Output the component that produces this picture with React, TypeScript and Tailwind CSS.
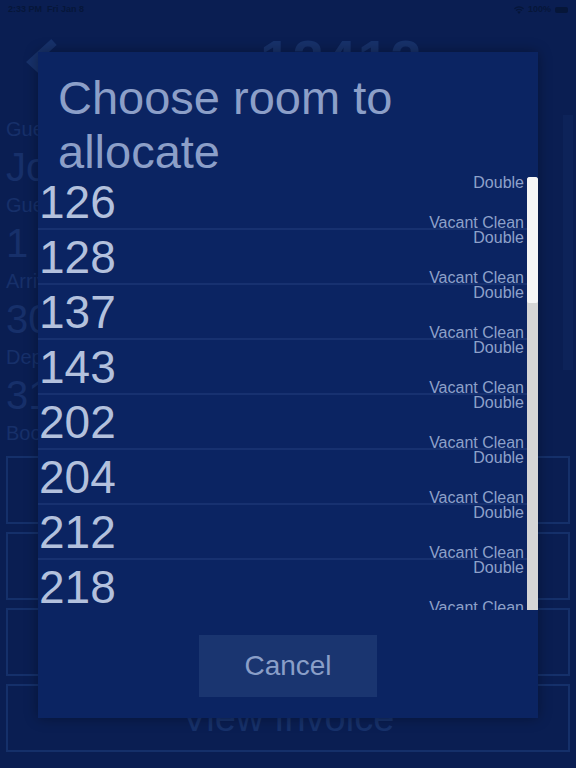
import React from "react";

const rooms = ["126", "128", "137", "143", "202", "204", "212", "218"];

const fields = [
  { label: "Guest", value: "John Smith" },
  { label: "Guests", value: "1" },
  { label: "Arrival", value: "30/12/2020" },
  { label: "Departure", value: "31/12/2020" },
];

const actions = ["Allocate Room", "Check In", "Add Payment", "View Invoice"];

function StatusBar() {
  return (
    <div className="flex h-[20px] items-center justify-between px-[8px] text-[9px] font-semibold text-[#061639]">
      <span>2:33 PM&nbsp;&nbsp;Fri Jan 8</span>
      <div className="flex items-center gap-1">
        <svg width="10" height="8" viewBox="0 0 10 8" fill="#061639">
          <path d="M5 8 L3.2 5.8 A3 3 0 0 1 6.8 5.8 Z M1.6 4 A5.5 5.5 0 0 1 8.4 4 L7.6 4.9 A4.3 4.3 0 0 0 2.4 4.9 Z M0 2.3 A8 8 0 0 1 10 2.3 L9.2 3.2 A6.7 6.7 0 0 0 0.8 3.2 Z" />
        </svg>
        <span>100%</span>
        <div className="h-[6px] w-[13px] rounded-[2px] bg-[#061639]" />
      </div>
    </div>
  );
}

function RoomRow({ room }: { room: string }) {
  return (
    <div className="flex h-[55px] shrink-0 items-center justify-between border-b-2 border-[#173170] pl-[1px] pr-[3px]">
      <span className="text-[46px] leading-none text-[#b3c1dd]">{room}</span>
      <div className="flex h-[56px] flex-col items-end justify-between self-start text-[16px] leading-[16px] text-[#8ea1ca]">
        <span>Double</span>
        <span>Vacant Clean</span>
      </div>
    </div>
  );
}

export default function App() {
  return (
    <div
      className="relative h-[768px] w-[576px] overflow-hidden bg-[#0a1e52]"
      style={{ fontFamily: '"Liberation Sans", Arial, sans-serif' }}
    >
      {/* page behind the dialog */}
      <StatusBar />
      <div className="flex h-[50px] items-start">
        <svg width="40" height="44" viewBox="0 0 40 44" className="ml-[22px] mt-[18px]" fill="none" stroke="#17316a" strokeWidth="8">
          <path d="M32 4 L10 24 L32 44" />
        </svg>
        <span className="ml-[198px] mt-[12px] text-[56px] font-bold leading-none tracking-wide text-[#17316a]">12412</span>
      </div>
      <div className="flex flex-col pl-[6px] pt-[48px]">
        {fields.map((f) => (
          <div key={f.label} className="flex flex-col">
            <span className="text-[20px] leading-[22px] text-[#17306a]">{f.label}</span>
            <span className="text-[40px] leading-[54px] text-[#17306a]">{f.value}</span>
          </div>
        ))}
        <span className="text-[20px] leading-[22px] text-[#17306a]">Booking Ref</span>
      </div>
      <div className="mt-[12px] flex flex-col gap-[8px] px-[6px]">
        {actions.map((a) => (
          <div
            key={a}
            className="flex h-[68px] items-center justify-center border-2 border-[#15306a] text-[38px] text-[#17316a]"
          >
            {a}
          </div>
        ))}
      </div>
      <div className="absolute left-[563px] top-[115px] h-[255px] w-[10px] bg-[#0d2359]" />

      {/* dialog */}
      <div className="absolute left-[38px] top-[52px] flex h-[666px] w-[500px] flex-col bg-[#0b2462] shadow-[0_0_12px_rgba(0,0,0,0.35)]">
        <h1 className="-mb-[4px] pl-[20px] pt-[19px] text-[47px] font-normal leading-[54px] text-[#8c9fc8]">
          Choose room to
          <br />
          allocate
        </h1>
        <div className="relative h-[435px] shrink-0 overflow-hidden">
          <div className="flex flex-col pr-[11px]">
            {rooms.map((r) => (
              <RoomRow key={r} room={r} />
            ))}
          </div>
          <div className="absolute right-0 top-[2px] flex h-[433px] w-[11px] flex-col overflow-hidden rounded-t-[3px] bg-[#d6d6d6]">
            <div className="h-[126px] rounded-b-[2px] bg-[#f6f6f6]" />
          </div>
        </div>
        <div className="flex justify-center pt-[25px]">
          <button className="flex h-[62px] w-[178px] items-center justify-center bg-[#1a3570] text-[28px] text-[#8a9fc8]">
            Cancel
          </button>
        </div>
      </div>
    </div>
  );
}
